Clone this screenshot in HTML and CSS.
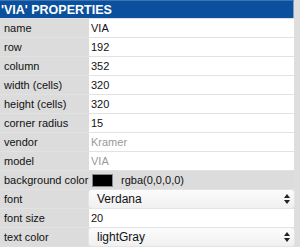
FILE: index.html
```html
<html lang="en">
<head>
    <meta charset="UTF-8">
    <title>VIA properties</title>
    <link rel="stylesheet" href="styles.css">
</head>
<body>
    <div class="panel">
        <div class="title">'VIA' PROPERTIES</div>
        <div class="props">
            <div class="label">name</div><div class="value">VIA</div>
            <div class="label">row</div><div class="value">192</div>
            <div class="label">column</div><div class="value">352</div>
            <div class="label">width (cells)</div><div class="value">320</div>
            <div class="label">height (cells)</div><div class="value">320</div>
            <div class="label">corner radius</div><div class="value">15</div>
            <div class="label">vendor</div><div class="value muted">Kramer</div>
            <div class="label">model</div><div class="value muted">VIA</div>
            <div class="label">background color</div>
            <div class="value grey"><span class="swatch"></span>rgba(0,0,0,0)</div>
            <div class="label">font</div>
            <div class="value sel"><div class="select">Verdana<svg class="arrows" width="6" height="10" viewBox="0 0 6 10"><path d="M3 0 L6 4 L0 4 Z M0 6 L6 6 L3 10 Z" fill="#222"/></svg></div></div>
            <div class="label">font size</div><div class="value">20</div>
            <div class="label">text color</div>
            <div class="value sel"><div class="select">lightGray<svg class="arrows" width="6" height="10" viewBox="0 0 6 10"><path d="M3 0 L6 4 L0 4 Z M0 6 L6 6 L3 10 Z" fill="#222"/></svg></div></div>
        </div>
    </div>
</body>
</html>
```
FILE: styles.css
```css
*{
    box-sizing: border-box;
}
body{
    margin: 0;
    background: #dedede;
    font-family: "Liberation Sans", Arial, sans-serif;
    font-size: 11px;
    color: #111;
}
.panel{
    width: 294px;
}
.title{
    background: #0a509d;
    color: #fff;
    font-weight: bold;
    font-size: 12.5px;
    height: 18px;
    line-height: 18px;
    padding-left: 1px;
    border-top: 1px solid #3a74b4;
    border-right: 1px solid #7a9fc8;
}
.props{
    display: grid;
    grid-template-columns: 89px 1fr;
    grid-auto-rows: 18px;
    row-gap: 1px;
    background: #e2e2e2;
    padding-top: 1px;
}
.label{
    background: #dcdcdc;
    padding-left: 4px;
    line-height: 18px;
}
.value{
    background: #fff;
    padding-left: 2px;
    line-height: 18px;
    display: flex;
    align-items: center;
}
.muted{
    color: #999;
}
.grey{
    background: #dcdcdc;
}
.swatch{
    display: inline-block;
    width: 21px;
    height: 13px;
    background: #000;
    border: 1px solid #888;
    margin-left: 1px;
    margin-right: 8px;
}
.sel{
    padding: 0;
    background: #dcdcdc;
}
.select{
    flex: 1;
    height: 18px;
    background: linear-gradient(#fcfcfc, #f0f0f0);
    border-radius: 3px;
    padding-left: 8px;
    font-size: 12px;
    display: flex;
    align-items: center;
    justify-content: space-between;
    padding-right: 4px;
    box-shadow: 0 0 0 1px #e4e4e4;
}
```
